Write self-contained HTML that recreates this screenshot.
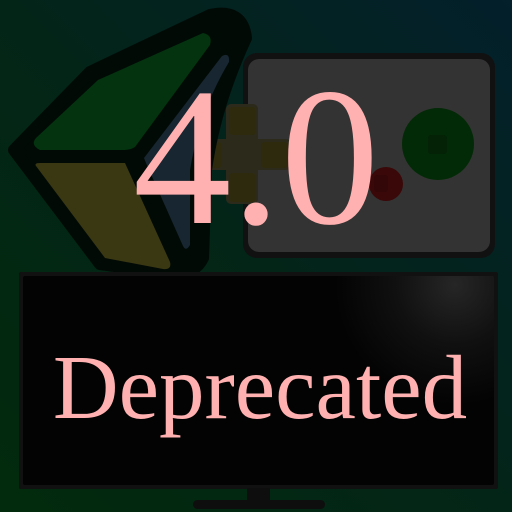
<!DOCTYPE html>
<html><head><meta charset="utf-8"><style>html,body{margin:0;padding:0;width:512px;height:512px;overflow:hidden;background:#03230f;position:relative}
.t{position:absolute;font-family:"Liberation Serif","Times New Roman",Times,"Nimbus Roman","DejaVu Serif","Noto Serif CJK SC",serif;color:#ffb0b0;line-height:normal;white-space:nowrap;text-align:center;width:512px;left:0}</style></head>
<body>
<svg style="position:absolute;left:0;top:0" width="512" height="512" viewBox="0 0 512 512" xmlns="http://www.w3.org/2000/svg">
<defs>
<linearGradient id="bg" x1="0" y1="1" x2="1" y2="0">
<stop offset="0" stop-color="#022a0c"/><stop offset="0.5" stop-color="#032518"/><stop offset="1" stop-color="#03202b"/>
</linearGradient>
<radialGradient id="glare" cx="455" cy="285" r="120" gradientUnits="userSpaceOnUse">
<stop offset="0" stop-color="#262626"/><stop offset="0.5" stop-color="#101010"/><stop offset="1" stop-color="#030303"/>
</radialGradient>
</defs>
<rect width="512" height="512" fill="url(#bg)"/>
<rect x="243" y="53" width="252" height="205" rx="14" fill="#111"/>
<rect x="248" y="59" width="242" height="193" rx="11" fill="#333"/>
<rect x="226" y="104" width="32" height="100" rx="5" fill="#2c2a1a"/>
<rect x="203" y="139" width="88" height="31" rx="5" fill="#2c2a1a"/>
<rect x="229" y="107" width="27" height="28" rx="4" fill="#2e2a0e"/>
<rect x="229" y="173" width="27" height="29" rx="4" fill="#2e2a0e"/>
<rect x="261" y="142" width="27" height="26" rx="4" fill="#2e2a0e"/>
<rect x="206" y="142" width="16" height="26" rx="4" fill="#2e2a0e"/>
<circle cx="438" cy="144" r="36" fill="#032a06"/>
<rect x="428" y="135" width="19" height="19" rx="3" fill="#032206"/>
<circle cx="386" cy="184" r="17" fill="#3a0808"/>
<rect x="374" y="175" width="14" height="17" rx="3" fill="#330707"/>
<path d="M14,150 L90,72 L210,15 Q243,8 246,38 Q215,105 206,170 L203,258 Q195,275 170,274 L100,264 Z" fill="#020a06" stroke="#020a06" stroke-width="12" stroke-linejoin="round"/>
<path d="M36,138 L98,80 L203,33 Q213,35 210,45 L135,147 Q130,150 124,150 L40,150 Q30,145 36,138 Z" fill="#03330f"/>
<path d="M36,166 Q34,163 40,163 L125,163 L170,262 Q172,270 163,269 L105,258 Z" fill="#3a3813"/>
<path d="M144,158 L222,56 Q230,52 229,62 Q200,110 190,170 L190,245 Q186,252 183,246 L146,163 Z" fill="#172630"/>
<rect x="19" y="272" width="479" height="217" rx="2" fill="#111"/>
<rect x="23" y="276" width="471" height="209" rx="2" fill="url(#glare)"/>
<rect x="247" y="488" width="23" height="13" fill="#0e0e0e"/>
<rect x="193" y="500" width="132" height="9" rx="4.5" fill="#0e0e0e"/>
</svg>
<div class="t" style="top:43px;font-size:197px">4.0</div>
<div class="t" style="top:335px;font-size:91px;left:4px">Deprecated</div>
</body></html>
